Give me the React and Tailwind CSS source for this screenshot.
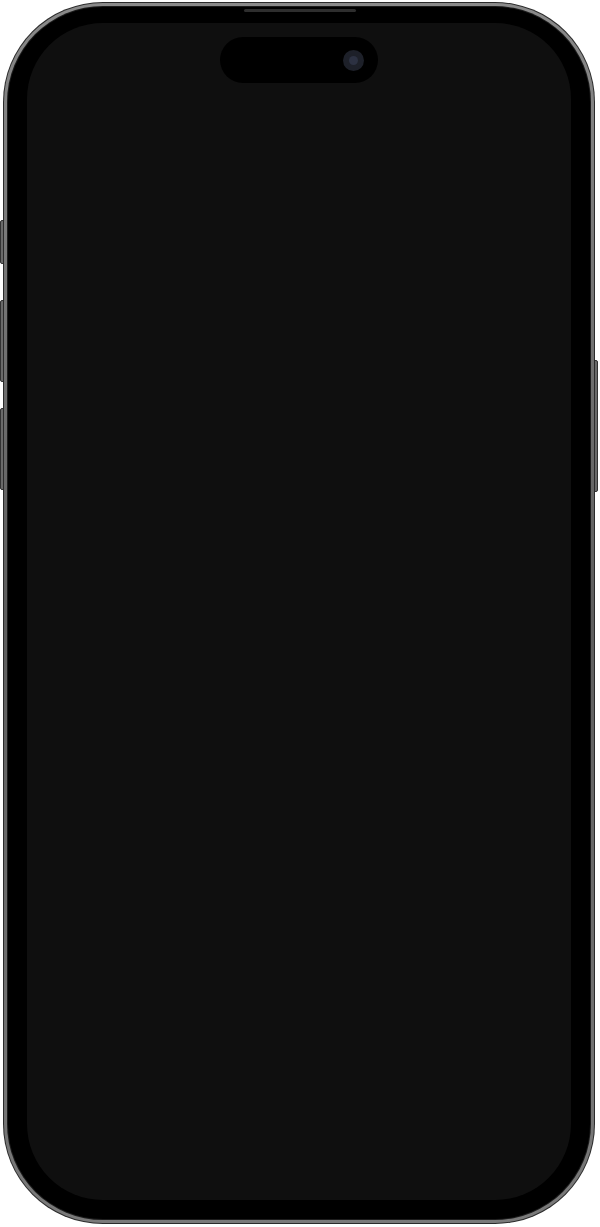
import React from 'react';

export default function App() {
    return (
        <div className="w-[600px] h-[1227px] bg-white pt-[2px] pl-[3px]">
            <div className="relative w-[592px] h-[1222px]">
                {/* Side buttons */}
                <div className="absolute left-[-3px] top-[218px] w-[4px] h-[44px] rounded-l-[2px] bg-[#6a6a6a] border border-[#333]" />
                <div className="absolute left-[-3px] top-[298px] w-[4px] h-[82px] rounded-l-[2px] bg-[#6a6a6a] border border-[#333]" />
                <div className="absolute left-[-3px] top-[406px] w-[4px] h-[82px] rounded-l-[2px] bg-[#6a6a6a] border border-[#333]" />
                <div className="absolute right-[-3px] top-[358px] w-[4px] h-[132px] rounded-r-[2px] bg-[#6a6a6a] border border-[#333]" />

                {/* Frame */}
                <div className="relative w-full h-full rounded-[100px] bg-[#2b2b2b] p-px">
                    <div className="w-full h-full rounded-[99px] bg-gradient-to-b from-[#8a8a8a] via-[#5e5e5e] to-[#7a7a7a] p-[3px]">
                        <div className="w-full h-full rounded-[96px] bg-[#1c1c1c] p-px">
                            <div className="relative w-full h-full rounded-[95px] bg-black pt-[16px] pb-[19px] px-[19px]">
                                {/* Speaker */}
                                <div className="absolute top-[2px] left-[236px] w-[112px] h-[3px] rounded-full bg-[#2e2e2e]" />
                                {/* Screen */}
                                <div className="relative w-full h-full rounded-[76px] bg-[#0f0f0f] flex justify-center">
                                    {/* Dynamic island */}
                                    <div className="mt-[14px] w-[158px] h-[46px] rounded-full bg-black flex items-center justify-end pr-[14px]">
                                        <div className="w-[21px] h-[21px] rounded-full bg-[#1d2029] flex items-center justify-center">
                                            <div className="w-[9px] h-[9px] rounded-full bg-[#2c3142]" />
                                        </div>
                                    </div>
                                </div>
                            </div>
                        </div>
                    </div>
                </div>
            </div>
        </div>
    );
}
